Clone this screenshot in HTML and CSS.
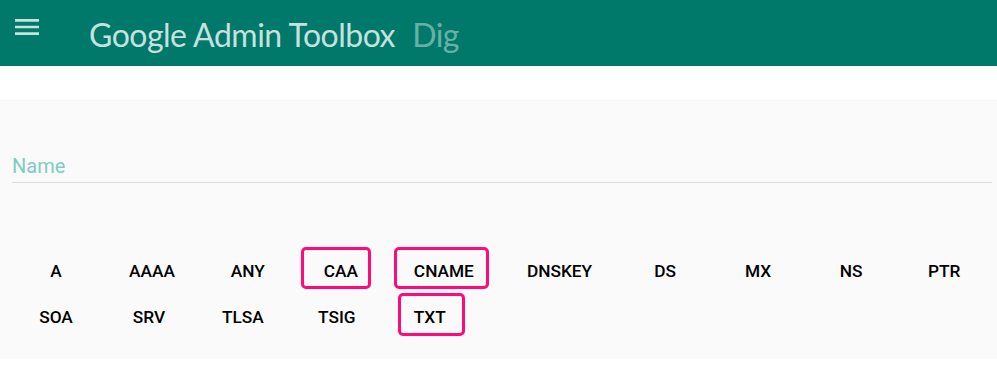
FILE: index.html
```html
<!DOCTYPE html>
<html lang="en">
<head>
<meta charset="utf-8">
<title>Google Admin Toolbox Dig</title>
<link rel="stylesheet" href="styles.css">
</head>
<body>
<header class="topbar">
  <svg class="menu-icon" viewBox="0 0 24 24" width="32" height="32" aria-hidden="true">
    <path d="M3 18h18v-2H3v2zm0-5h18v-2H3v2zm0-7v2h18V6H3z" fill="currentColor"/>
  </svg>
  <div class="title">
    <span class="brand">Google Admin Toolbox</span>
    <span class="app">Dig</span>
  </div>
</header>

<main class="card">
  <div class="field">
    <div class="field-label">Name</div>
  </div>
  <div class="types">
    <button class="type">A</button>
    <button class="type">AAAA</button>
    <button class="type">ANY</button>
    <button class="type">CAA</button>
    <button class="type">CNAME</button>
    <button class="type">DNSKEY</button>
    <button class="type">DS</button>
    <button class="type">MX</button>
    <button class="type">NS</button>
    <button class="type">PTR</button>
    <button class="type">SOA</button>
    <button class="type">SRV</button>
    <button class="type">TLSA</button>
    <button class="type">TSIG</button>
    <button class="type">TXT</button>
  </div>
  <div class="mark mark-caa"></div>
  <div class="mark mark-cname"></div>
  <div class="mark mark-txt"></div>
</main>
</body>
</html>
```

FILE: styles.css
```css
html, body {
  margin: 0;
  padding: 0;
  background: #ffffff;
}

body {
  font-family: Roboto, "Liberation Sans", Arial, sans-serif;
}

.topbar {
  height: 66px;
  background: #00796b;
  display: flex;
  align-items: flex-start;
  color: rgba(255, 255, 255, 0.78);
}

.menu-icon {
  display: block;
  margin: 11px 0 0 11px;
  flex: none;
}

.title {
  margin: 16px 0 0 46px;
  font-family: Lato, "Open Sans", sans-serif;
  font-size: 32px;
  line-height: 38px;
  white-space: nowrap;
}

.brand {
  color: rgba(255, 255, 255, 0.78);
  letter-spacing: -0.5px;
}

.app {
  margin-left: 9px;
  color: rgba(255, 255, 255, 0.42);
  letter-spacing: -0.6px;
}

.card {
  position: relative;
  margin-top: 35px;
  background: #fafafa;
  padding: 0 5px 24px 12px;
  box-shadow: 0 1px 0 #c2c2c2, 0 2px 3px rgba(0, 0, 0, 0.25), 0 -1px 2px rgba(0, 0, 0, 0.04);
}

.field {
  padding-top: 53px;
}

.field-label {
  font-size: 20px;
  line-height: 24px;
  color: #80cbc4;
  padding-bottom: 4px;
  border-bottom: 1px solid #dcdcdc;
}

.types {
  display: flex;
  flex-wrap: wrap;
  column-gap: 21px;
  row-gap: 10px;
  margin: 70px 0 0 8px;
}

.type {
  min-width: 72px;
  height: 36px;
  padding: 0 16px;
  border: 0;
  background: transparent;
  font-family: Roboto, "Liberation Sans", sans-serif;
  font-weight: 500;
  font-size: 17.3px;
  line-height: 36px;
  color: #000000;
  text-align: center;
  cursor: pointer;
}

.mark {
  position: absolute;
  border: 3px solid #ff0a78;
  border-radius: 5px;
  box-sizing: border-box;
  pointer-events: none;
}

.mark-caa {
  left: 301px;
  top: 146px;
  width: 70px;
  height: 42px;
}

.mark-cname {
  left: 394px;
  top: 146px;
  width: 95px;
  height: 42px;
}

.mark-txt {
  left: 398px;
  top: 192px;
  width: 67px;
  height: 43px;
}
```
